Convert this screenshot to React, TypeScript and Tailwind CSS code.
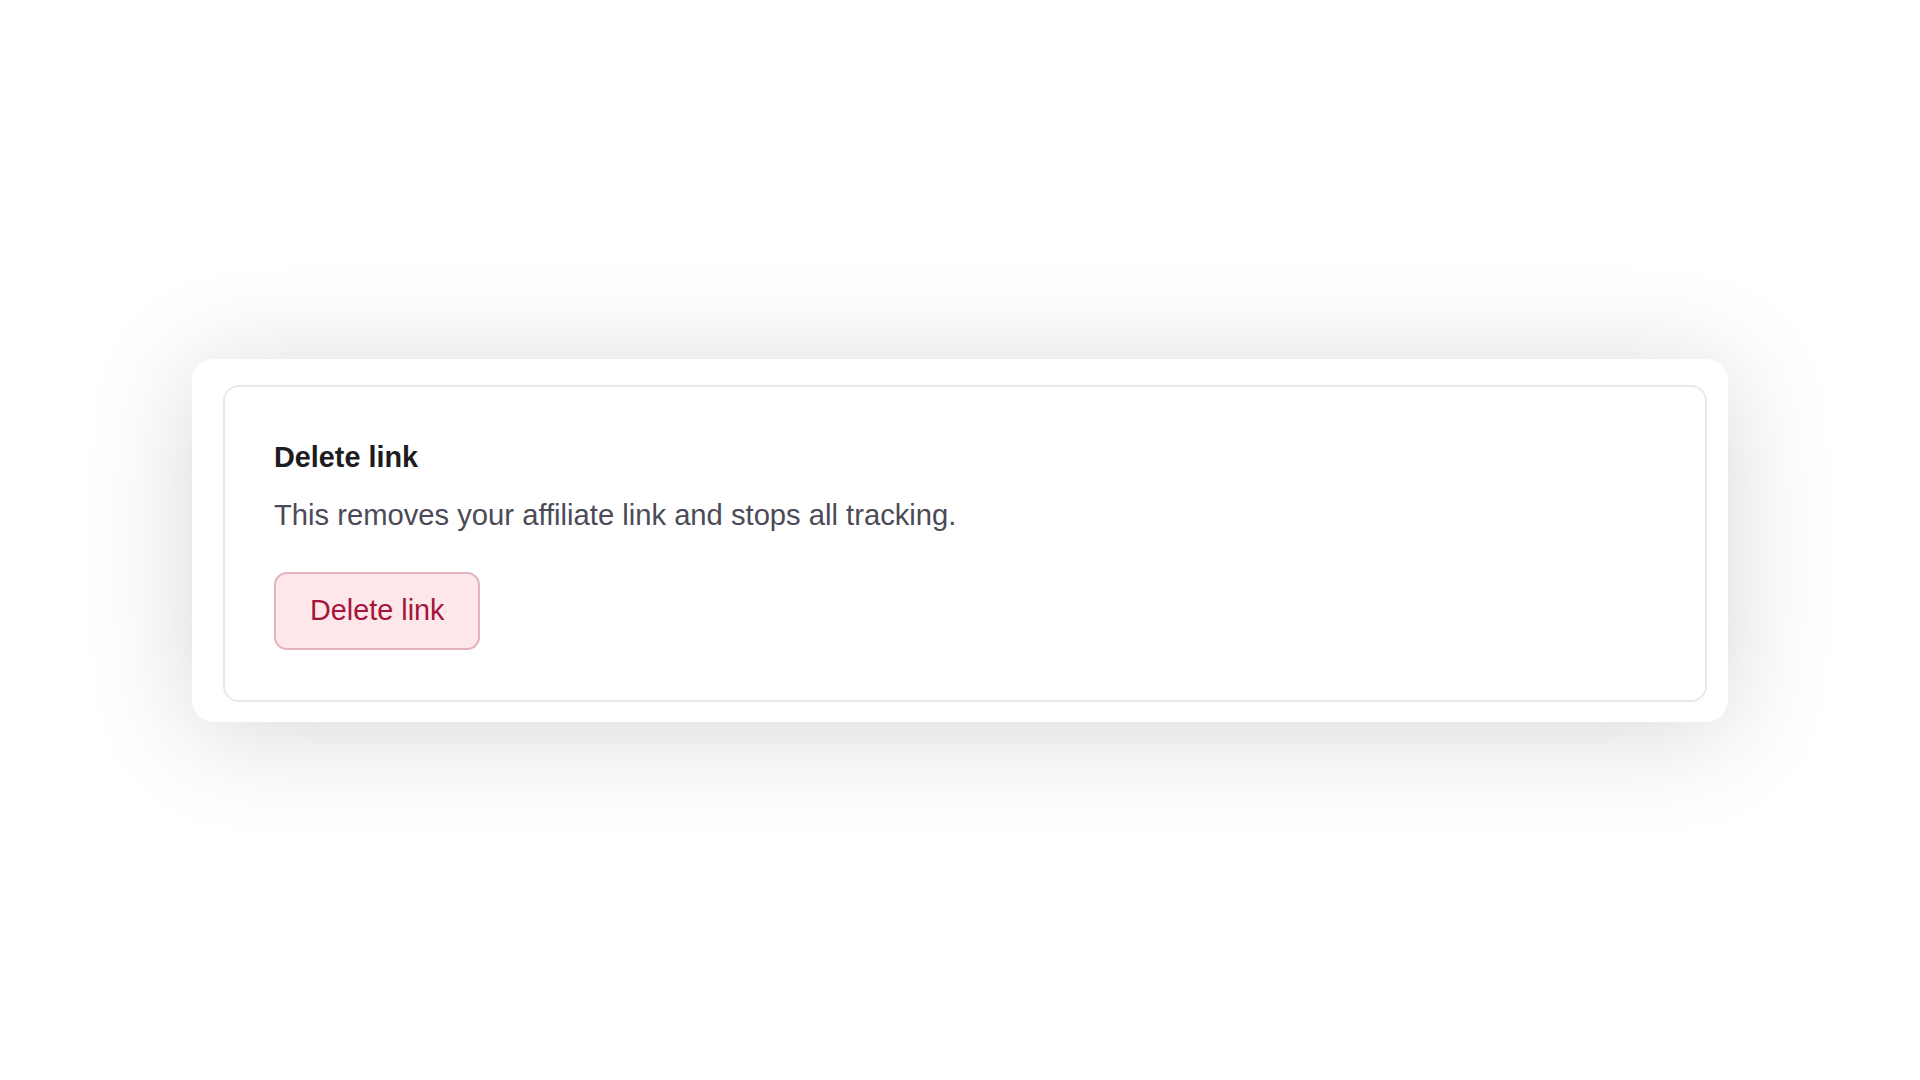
export default function App() {
  return (
    <div className="w-full h-screen bg-white flex items-center justify-center" style={{ fontFamily: '"Liberation Sans", Arial, sans-serif' }}>
      {/* Outer frame */}
      <div className="w-[1536px] bg-white rounded-[22px] pl-[31px] pt-[26px] pr-[21px] pb-[20px] shadow-[0_10px_110px_rgba(0,0,0,0.16)]">
        {/* Inner card */}
        <div className="rounded-[16px] border-2 border-[#e9e9eb] bg-white px-[49px] pt-[49px] pb-[50px]">
          <h3 className="text-[28.8px] leading-[43px] font-bold text-[#1c1c21]">Delete link</h3>
          <p className="mt-[15px] text-[29.2px] leading-[43px] text-[#4b4b57]">
            This removes your affiliate link and stops all tracking.
          </p>
          <button className="mt-[35px] h-[78px] px-[34px] rounded-[13px] border-2 border-[#e3b2bb] bg-[#fde7ea] text-[28.8px] leading-[43px] text-[#a5153a]">
            Delete link
          </button>
        </div>
      </div>
    </div>
  );
}
